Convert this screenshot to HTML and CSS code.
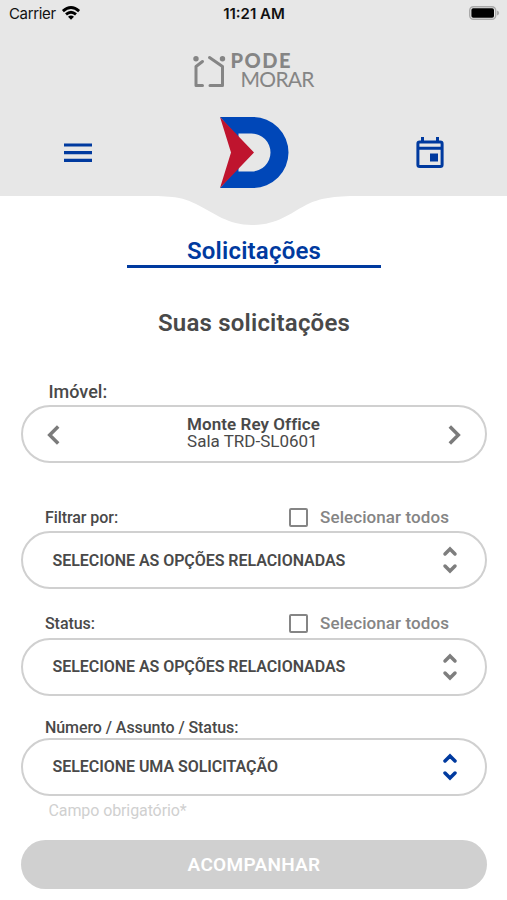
FILE: index.html
```html
<!DOCTYPE html>
<html lang="pt-BR">
<head>
<meta charset="utf-8">
<meta name="viewport" content="width=device-width, initial-scale=1">
<title>Solicitações</title>
<link rel="stylesheet" href="styles.css">
</head>
<body>
<header class="header">
  <div class="status-bar">
    <div class="carrier">
      <span>Carrier</span>
      <svg class="wifi" viewBox="0 0 18 14" width="18" height="14"><g fill="none" stroke="#000" stroke-width="2.8"><path d="M.9 5.1Q9-2.2 17.1 5.1"/><path d="M4 8.4Q9 4 14 8.4"/></g><path d="M6 10.7Q9 8.1 12 10.7L9 13.8z"/></svg>
    </div>
    <span class="clock">11:21 AM</span>
    <svg class="battery" viewBox="0 0 31 14" width="31" height="14"><rect x=".7" y=".7" width="26" height="12.6" rx="3.8" fill="#e7e7e7" stroke="#a9a9a9" stroke-width="1.4"/><rect x="2.4" y="2.3" width="22.6" height="9.4" rx="1.8"/><path d="M28 4.6q2.2.6 2.2 2.4T28 9.4z" fill="#a9a9a9"/></svg>
  </div>
  <svg class="brand" viewBox="0 0 126 44" width="126" height="44">
    <g fill="none" stroke="#858585" stroke-width="3" stroke-linecap="round" stroke-linejoin="round"><path d="M10.500 11.500L4 16.500V35.500H10.500M17.500 7.500L30.500 16.500V35.500H18"/></g>
    <circle cx="4" cy="8.800" r="2.700" fill="#858585"/><circle cx="30.500" cy="8.800" r="2.700" fill="#858585"/>
    <text class="brand-bold" x="38.500" y="18.300" textLength="60">PODE</text>
    <text class="brand-light" x="48.500" y="37" textLength="74">MORAR</text>
  </svg>
  <nav class="nav">
    <svg viewBox="0 0 28 20" width="28" height="20"><path d="M0 2h28M0 9.700h28M0 17.300h28" stroke="#003a9f" stroke-width="3.200"/></svg>
    <svg viewBox="0 0 69 71" width="69" height="71"><path fill="#0047b8" d="M0 0H33A35.500 35.500 0 0 1 33 71H0L18.500 50V54.500H31.500A19 19 0 0 0 31.500 16.500H18.500V21z"/><path fill="#bf142e" d="M0 0L34 35.500L0 71L11 35.500z"/></svg>
    <svg viewBox="0 0 28 32" width="28" height="32"><g fill="none" stroke="#003a9f" stroke-width="3"><rect x="1.900" y="5" width="24.200" height="24.500" rx="1.800"/><path d="M1.900 11.300h24.200M6.500 0v5M21.500 0v5"/></g><path d="M14 16.500h8v8h-8z" fill="#003a9f"/></svg>
  </nav>
</header>
<svg class="wave" viewBox="0 0 210 30" width="210" height="30"><path fill="#e7e7e7" d="M0 0C26 0 35 2 47 8C65 17 79 29 103 29C128 29 140 18 157 9C171 2 184 0 210 0z"/></svg>
<main class="content">
  <h1 class="title">Solicitações</h1>
  <h2 class="subtitle">Suas solicitações</h2>

  <section class="field property">
    <label class="property-label">Imóvel:</label>
    <div class="pill picker">
      <svg class="arrow" viewBox="0 0 13 20" width="13" height="20"><path d="M11.200 1.500L2.700 10l8.500 8.500"/></svg>
      <div class="property-name"><strong>Monte Rey Office</strong><span>Sala TRD-SL0601</span></div>
      <svg class="arrow" viewBox="0 0 13 20" width="13" height="20"><path d="M1.800 1.500L10.300 10l-8.500 8.500"/></svg>
    </div>
  </section>

  <section class="field filter">
    <div class="label-row"><span class="label label-filter">Filtrar por:</span><label class="check"><span class="box"></span><span class="check-text">Selecionar todos</span></label></div>
    <div class="pill select"><span class="value">SELECIONE AS OPÇÕES RELACIONADAS</span>
      <svg class="chevrons" viewBox="0 0 14 28" width="14" height="28"><path d="M2 8L7 3l5 5M2 20l5 5 5-5"/></svg></div>
  </section>

  <section class="field status">
    <div class="label-row"><span class="label">Status:</span><label class="check"><span class="box"></span><span class="check-text">Selecionar todos</span></label></div>
    <div class="pill select"><span class="value">SELECIONE AS OPÇÕES RELACIONADAS</span>
      <svg class="chevrons" viewBox="0 0 14 28" width="14" height="28"><path d="M2 8L7 3l5 5M2 20l5 5 5-5"/></svg></div>
  </section>

  <section class="field request">
    <div class="label-row"><span class="label label-request">Número / Assunto / Status:</span></div>
    <div class="pill select"><span class="value">SELECIONE UMA SOLICITAÇÃO</span>
      <svg class="chevrons active" viewBox="0 0 14 28" width="14" height="28"><path d="M2 8L7 3l5 5M2 20l5 5 5-5"/></svg></div>
    <p class="hint">Campo obrigatório*</p>
  </section>

  <button class="submit">ACOMPANHAR</button>
</main>
</body>
</html>
```
FILE: styles.css
```css
* { box-sizing: border-box; }
body {
  margin: 0;
  height: 900px;
  overflow: hidden;
  background: #fff;
  color: #494949;
  font-family: Roboto, "Liberation Sans", sans-serif;
}
svg { display: block; flex: none; overflow: visible; }
.header { height: 196px; background: #e7e7e7; }
.status-bar {
  display: grid;
  grid-template-columns: 1fr auto 1fr;
  align-items: center;
  height: 28px;
  padding: 0 7px 0 9px;
  font: 15px/28px Inter, sans-serif;
  color: #111;
}
.carrier { display: flex; align-items: center; gap: 6px; letter-spacing: -0.35px; }
.wifi { margin-top: -2px; }
.clock { font-weight: 600; font-size: 15px; margin-left: -1px; }
.battery { justify-self: end; margin-top: -2px; }
.brand { margin: 22px 0 0 192px; }
.brand text { fill: #858585; font-family: Lato, sans-serif; }
.brand .brand-bold { font-size: 20px; font-weight: 900; }
.brand .brand-light { font-size: 21px; font-weight: 400; }
.nav {
  display: flex;
  align-items: center;
  justify-content: space-between;
  height: 71px;
  margin-top: 23px;
  padding: 0 63px 0 64px;
}
.wave { margin: 0 auto; }
.content { padding: 11px 20px 0 21px; }
.title, .subtitle { margin: 0; text-align: center; font-size: 24px; line-height: 28px; font-weight: 600; letter-spacing: 0.2px; }
.title { width: 254px; margin: 0 auto; color: #003a9f; border-bottom: 3px solid #003a9f; }
.subtitle { margin-top: 41px; }
.pill {
  display: flex;
  align-items: center;
  height: 58px;
  border: 2px solid #d0d0d0;
  border-radius: 29px;
}
.property { margin-top: 45px; }
.property-label { display: block; margin-left: 27.500px; height: 23px; font-size: 18px; line-height: 20px; font-weight: 500; }
.picker { justify-content: space-between; padding: 1px 24px 0; }
.arrow path, .chevrons path { fill: none; stroke: #7b7b7b; stroke-width: 3.500; }
.chevrons path { stroke: #7e7e7e; stroke-linecap: round; }
.chevrons.active path { stroke: #003a9f; }
.property-name { display: flex; flex-direction: column; font-size: 17px; line-height: 17.500px; margin: -3px 0 0 -1px; letter-spacing: 0.06px; }
.property-name strong { font-weight: 600; }
.property-name span { letter-spacing: 0; }
.label-row { display: flex; align-items: center; justify-content: space-between; height: 20px; padding: 0 38px 0 24px; line-height: 20px; }
.label { font-size: 16px; font-weight: 500; letter-spacing: -0.07px; padding-top: 2px; }
.label-request { padding-top: 1px; }
.check { display: flex; align-items: center; gap: 12px; }
.box { width: 19px; height: 19px; border: 2px solid #858585; border-radius: 2px; }
.check-text { font-size: 17px; font-weight: 500; color: #858585; letter-spacing: 0.08px; }
.filter { margin-top: 44px; }
.filter .pill { margin-top: 4px; }
.status { margin-top: 24px; }
.status .pill { margin-top: 5px; }
.status .value, .request .value { margin-top: -1px; }
.request { margin-top: 21px; }
.request .pill { margin-top: 1px; }
.select { justify-content: space-between; padding: 0 28.500px 0 29.500px; }
.value { font-size: 16px; font-weight: 600; letter-spacing: -0.05px; }
.hint { margin: 5px 0 0 27.500px; font-size: 16px; line-height: 20px; color: #d0d0d0; letter-spacing: -0.1px; }
.submit {
  display: block;
  width: 100%;
  height: 49px;
  margin-top: 19px;
  padding: 0;
  border: 0;
  border-radius: 25px;
  background: #d0d0d0;
  color: #fff;
  font: 600 19px/49px Roboto, sans-serif;
  letter-spacing: 0.3px;
}
```
